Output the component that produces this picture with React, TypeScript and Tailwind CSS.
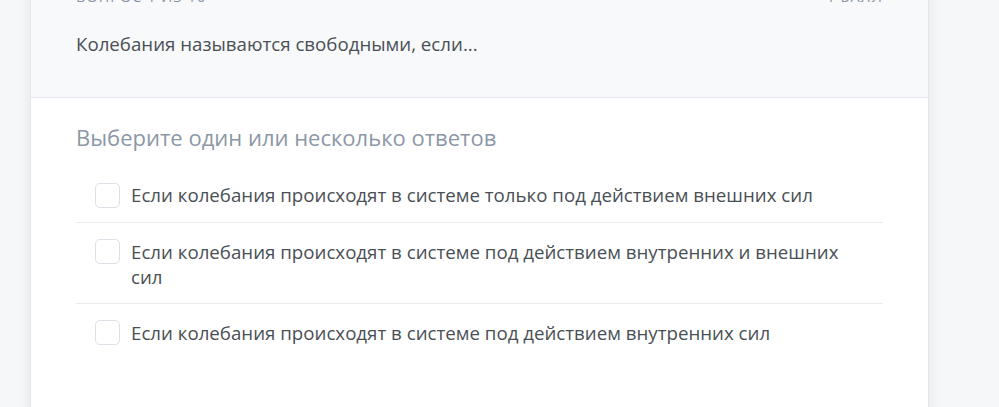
const options = [
  "Если колебания происходят в системе только под действием внешних сил",
  "Если колебания происходят в системе под действием внутренних и внешних сил",
  "Если колебания происходят в системе под действием внутренних сил",
];

export default function App() {
  return (
    <div className="min-h-screen h-[407px] overflow-hidden bg-[#f6f7f9] font-['Open_Sans',sans-serif]">
      <div className="ml-[30px] w-[899px] -mt-[16px] bg-white border border-[#e3e6eb] shadow-[0_0_14px_rgba(30,40,60,0.08)]">
        {/* Header */}
        <div className="bg-[#f8f9fb] border-b border-[#e5e8ee] px-[45px] pt-[4px] pb-[41px]">
          <div className="flex justify-between text-[14.5px] leading-[16px] uppercase tracking-[0.07em] text-[#8b95a3]">
            <span>Вопрос 1 из 10</span>
            <span>1 балл</span>
          </div>
          <p className="mt-[27px] text-[18.7px] leading-[24px] text-[#4a4f55]">
            Колебания называются свободными, если...
          </p>
        </div>

        {/* Answers */}
        <div className="px-[45px] pt-[25px] pb-[80px]">
          <h3 className="text-[22px] leading-[28px] text-[#8c97a6]">
            Выберите один или несколько ответов
          </h3>
          <div className="mt-[15px]">
            {options.map((opt, i) => (
              <label
                key={i}
                className={`flex items-start gap-[11px] pl-[19px] pr-[20px] pt-[16px] pb-[14px] cursor-pointer ${
                  i < options.length - 1 ? "border-b border-[#e8ebef]" : ""
                }`}
              >
                <span className="mt-[0.5px] w-[25px] h-[25px] shrink-0 rounded-[5px] border-[1.5px] border-[#dcdfe5] bg-white" />
                <span className="text-[18.7px] leading-[25px] text-[#4a4f55]">{opt}</span>
              </label>
            ))}
          </div>
        </div>
      </div>
    </div>
  );
}
